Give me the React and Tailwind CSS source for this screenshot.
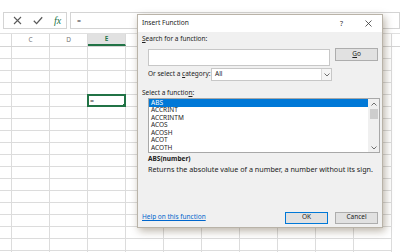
import React from 'react';

const FONT = { fontFamily: '"Noto Sans", "Open Sans", sans-serif' };

const functions = ['ABS', 'ACCRINT', 'ACCRINTM', 'ACOS', 'ACOSH', 'ACOT', 'ACOTH'];
// columns past E sit under the dialog, so they carry no label
const columns = [
  { label: '', w: 'w-[12px]' },
  { label: 'C', w: 'w-[38px]' },
  { label: 'D', w: 'w-[38px]' },
  { label: 'E', w: 'w-[38px]', active: true },
  { label: '', w: 'w-[38px]' },
  { label: '', w: 'w-[38px]' },
  { label: '', w: 'w-[38px]' },
  { label: '', w: 'w-[38px]' },
  { label: '', w: 'w-[38px]' },
  { label: '', w: 'w-[38px]' },
  { label: '', w: 'w-[38px]' },
];
const rows = Array.from({ length: 18 }, (_, i) => i);

const Chevron = ({ up }) => (
  <svg width="6" height="4" viewBox="0 0 6 4" className="block">
    <path
      d={up ? 'M0.5 3.5 L3 1 L5.5 3.5' : 'M0.5 0.5 L3 3 L5.5 0.5'}
      fill="none"
      stroke="#606060"
      strokeWidth="0.9"
    />
  </svg>
);

const FormulaBar = () => (
  <div className="h-[33px] pt-[12px] flex items-start">
    <div className="ml-[3px] w-[64px] h-[17px] border border-[#d4d4d4] flex items-center">
      <svg width="9" height="9" viewBox="0 0 9 9" className="ml-[9px]">
        <path d="M1 1 L8 8 M8 1 L1 8" stroke="#5a5a5a" strokeWidth="1.1" />
      </svg>
      <svg width="10" height="9" viewBox="0 0 10 9" className="ml-[11px]">
        <path d="M0.8 4.8 L3.6 7.6 L9.2 1.2" fill="none" stroke="#5a5a5a" strokeWidth="1.3" />
      </svg>
      <span
        className="ml-[11px] text-[10px] italic leading-none text-[#217346]"
        style={{ fontFamily: '"Liberation Serif", serif' }}
      >
        fx
      </span>
    </div>
    <div className="ml-[3px] flex-1 h-[17px] border border-[#d4d4d4] flex items-center">
      <span className="ml-[6px] text-[7px] leading-none text-[#333]">=</span>
    </div>
  </div>
);

const Sheet = () => (
  <div className="border-t border-[#e0e0e0]">
    <div className="flex h-[13px] border-b border-[#d4d4d4]">
      {columns.map((c, i) => (
        <div
          key={i}
          className={`${c.w} shrink-0 border-r border-[#dadada] flex items-center justify-center text-[6.5px] leading-none ${
            c.active
              ? 'bg-[#e1e1e1] border-b-2 border-b-[#217346] text-[#217346] font-semibold'
              : 'text-[#777]'
          }`}
        >
          {c.label}
        </div>
      ))}
    </div>
    {rows.map((r) => (
      <div key={r} className="flex h-[12px]">
        {columns.map((c, i) => (
          <div
            key={i}
            className={`${c.w} shrink-0 border-r border-b border-[#dcdcdc] relative`}
          >
            {r === 4 && c.active && (
              <div className="absolute -left-[1px] -top-[1px] w-[39px] h-[13px] border-2 border-[#217346] flex items-center">
                <span className="ml-[1px] text-[7px] leading-none text-[#333]">=</span>
                <span className="absolute -right-[2px] -bottom-[2px] w-[3px] h-[3px] bg-[#217346]" />
              </div>
            )}
          </div>
        ))}
      </div>
    ))}
  </div>
);

const Button = ({ children, primary, className = '' }) => (
  <div
    className={`w-[43px] h-[12px] flex items-center justify-center text-[6.5px] leading-none text-[#222] bg-[#e1e1e1] border ${
      primary ? 'border-[#0078d7]' : 'border-[#adadad]'
    } ${className}`}
  >
    {children}
  </div>
);

const InsertFunctionDialog = () => (
  <div
    className="absolute left-[137px] top-[14px] w-[246px] h-[214px] border border-[#b9b3a8] bg-[#f0f0f0] shadow-[2px_3px_8px_rgba(60,40,10,0.35)] flex flex-col text-[6.5px] leading-none text-[#222]"
    style={FONT}
  >
    {/* Title bar */}
    <div className="h-[17px] bg-white flex items-center shrink-0">
      <span className="ml-[4px] text-[6.6px]">Insert Function</span>
      <span className="ml-auto text-[7px] text-[#333]">?</span>
      <svg width="7" height="7" viewBox="0 0 7 7" className="ml-[22px] mr-[10px]">
        <path d="M0.5 0.5 L6.5 6.5 M6.5 0.5 L0.5 6.5" stroke="#333" strokeWidth="0.8" />
      </svg>
    </div>

    <div className="flex-1 flex flex-col px-[4px]">
      <div className="mt-[2px] h-[10px] flex items-center">
        <span className="underline">S</span>
        <span>earch for a function:</span>
      </div>

      <div className="mt-[5px] flex items-start">
        <div className="ml-[6px] w-[184px] h-[17px] bg-white border border-[#c7c7c7]" />
        <Button className="ml-[5px] -mt-[1px] h-[13px]">
          <span className="underline">G</span>
          <span>o</span>
        </Button>
      </div>

      <div className="mt-[2px] flex items-center h-[13px]">
        <div className="ml-[6px] w-[63px] flex items-center">
          <span className="whitespace-pre">Or select a </span>
          <span className="underline">c</span>
          <span>ategory:</span>
        </div>
        <div className="w-[121px] h-[13px] bg-white border border-[#c7c7c7] flex items-center">
          <span className="ml-[3px]">All</span>
          <div className="ml-auto w-[10px] h-[11px] border-l border-[#dadada] bg-[#f5f5f5] flex items-center justify-center">
            <Chevron />
          </div>
        </div>
      </div>

      <div className="mt-[7px] h-[10px] flex items-center">
        <span>Select a functio</span>
        <span className="underline">n</span>
        <span>:</span>
      </div>

      <div className="ml-[6px] w-[232px] h-[55px] shrink-0 bg-white border border-[#a8a8a8] flex overflow-hidden">
        <div className="flex-1 flex flex-col overflow-hidden">
          {functions.map((f, i) => (
            <div
              key={f}
              className={`h-[7.5px] shrink-0 flex items-center pl-[2px] text-[6.5px] leading-none ${
                i === 0 ? 'bg-[#0078d7] text-white' : 'text-[#222]'
              }`}
            >
              {f}
            </div>
          ))}
        </div>
        <div className="w-[11px] bg-[#f0f0f0] flex flex-col items-center">
          <div className="h-[9px] flex items-center justify-center">
            <Chevron up />
          </div>
          <div className="mt-[1px] w-[8px] h-[10px] bg-[#cdcdcd]" />
          <div className="mt-auto h-[9px] flex items-center justify-center">
            <Chevron />
          </div>
        </div>
      </div>

      <div className="ml-[6px] mt-[1px] h-[10px] flex items-center font-bold">ABS(number)</div>
      <div className="ml-[6px] mt-[1px] h-[10px] flex items-center text-[7.2px]">
        Returns the absolute value of a number, a number without its sign.
      </div>

      <div className="mt-auto mb-[3px] h-[13px] flex items-center">
        <span className="text-[#0066cc] underline">Help on this function</span>
        <Button primary className="ml-auto">OK</Button>
        <Button className="ml-[7px]">Cancel</Button>
      </div>
    </div>
  </div>
);

export default function App() {
  return (
    <div className="relative w-[400px] h-[252px] overflow-hidden bg-white" style={FONT}>
      <FormulaBar />
      <Sheet />
      <InsertFunctionDialog />
    </div>
  );
}
